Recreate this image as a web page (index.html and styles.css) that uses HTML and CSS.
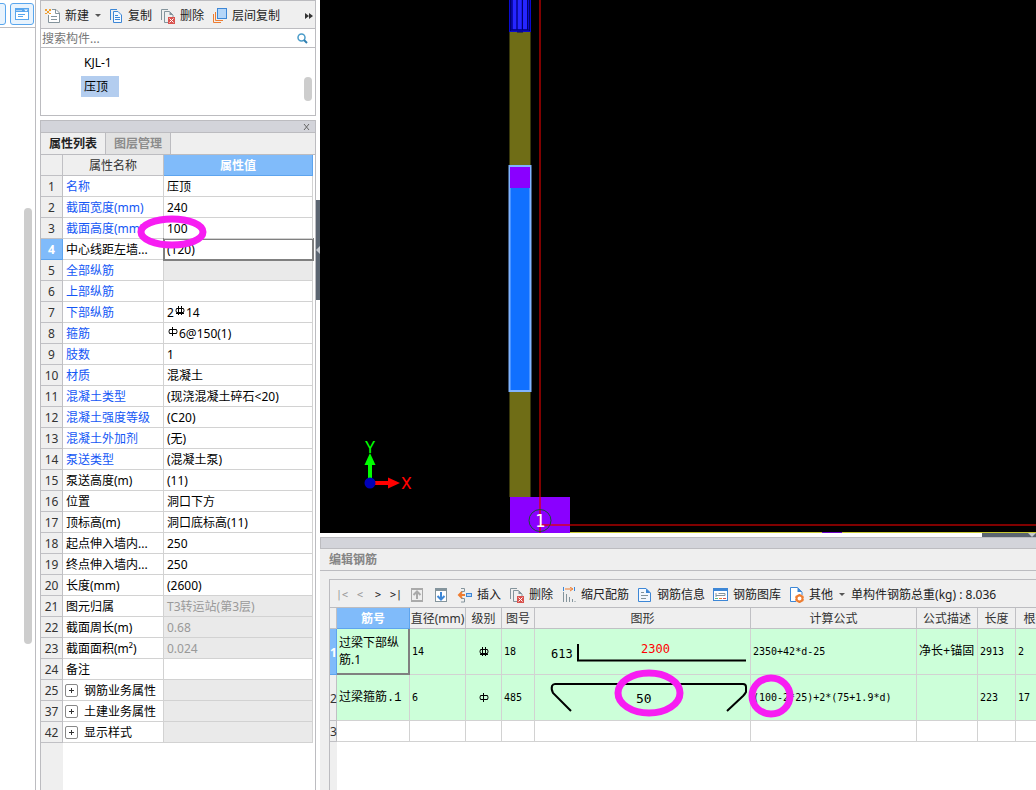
FILE: index.html
```html
<!DOCTYPE html>
<html lang="zh-CN">
<head>
<meta charset="utf-8">
<title>编辑钢筋</title>
<link rel="stylesheet" href="styles.css">
</head>
<body>
<svg width="0" height="0" class="defs" aria-hidden="true">
  <defs>
    <symbol id="i-delete" viewBox="0 0 15 16">
      <path d="M1.5 12V1.5H8" fill="none" stroke="#84949c"/>
      <path d="M9 14.5H4.500V3.500H9.500L13 7V9" fill="none" stroke="#84949c"/>
      <path d="M9.500 3.500V7H13z" fill="#84949c"/>
      <rect x="8" y="9" width="7" height="7" fill="#d9534f"/>
      <path d="M9.500 10.500l4 4m0-4l-4 4" stroke="#fff" stroke-width="1"/>
    </symbol>
    <symbol id="i-doc" viewBox="0 0 15 16">
      <path d="M1.500 1.500H9L13.500 6V14.500H1.500z" fill="#f4f9ff" stroke="#3d87d6"/>
      <path d="M9 1.500V6H13.500z" fill="#3d87d6"/>
      <path d="M4 5.500H7M4 8.500H11M4 11.500H9" stroke="#84949c"/>
    </symbol>
    <symbol id="r-two" viewBox="0 0 10 10">
      <path d="M1.500 2.500H8.500L9 4.500L8.500 6.500H1.500L1 4.500zM3.500 0V9M6.500 0V9M1 7.500H9" fill="none" stroke="#000"/>
    </symbol>
    <symbol id="r-one" viewBox="0 0 10 10">
      <path d="M1.500 2.500H8.500L9 4.500L8.500 6.500H1.500L1 4.500zM4.500 0V9" fill="none" stroke="#000"/>
    </symbol>
  </defs>
</svg>
<div class="app">
  <aside class="rail">
    <div class="rail-head">
      <button class="rail-btn" aria-label="列表视图"></button>
      <button class="rail-btn" aria-label="窗口视图">
        <svg width="14" height="12" viewBox="0 0 14 12"><rect x=".5" y=".5" width="13" height="11" fill="#fff" stroke="#58a6ee"/><rect width="14" height="4" fill="#58a6ee"/><path d="M1.500 2.500h1m1 0h1m1 0h1" stroke="#fff"/><path d="M9 1.500h4l-2 2z" fill="#fff"/><path d="M3 6.500h7M3 8.500h5" stroke="#58a6ee"/></svg>
      </button>
    </div>
    <div class="rail-thumb"></div>
  </aside>

  <section class="side">
    <div class="components">
      <div class="toolbar">
        <button class="tool"><svg width="15" height="16" viewBox="0 0 15 16"><path d="M7 1.500H11L14.500 5V14.500H3.500V7" fill="#fff" stroke="#84949c"/><path d="M10.500 1.500V5.500H14.500M6 8.500h6M6 11.500h6" fill="none" stroke="#84949c"/><path d="M0 1h2v2H0zM4 1h2v2H4zM2 3h2v2H2zM0 5h2v1H0zM4 5h2v1H4z" fill="#f0a030"/></svg>新建<span class="caret"></span></button>
        <button class="tool after-menu"><svg width="15" height="16" viewBox="0 0 15 16"><path d="M2.500 12V1.500H9" fill="none" stroke="#3d87d6"/><path d="M5.500 3.500H10L13.500 7V14.500H5.500z" fill="#f4f9ff" stroke="#3d87d6"/><path d="M7 7.500h3M7 9.500h5M7 11.500h5" stroke="#3d87d6"/></svg>复制</button>
        <button class="tool"><svg width="15" height="16"><use href="#i-delete"/></svg>删除</button>
        <button class="tool"><svg width="15" height="16" viewBox="0 0 15 16"><path d="M1.500 6V14.500H9" fill="none" stroke="#ee7d31"/><path d="M3.500 4V12.500H11" fill="none" stroke="#ee7d31"/><rect x="5.500" y=".5" width="9" height="10" fill="#b5d6f8" stroke="#3d87d6"/></svg>层间复制</button>
        <button class="more" aria-label="更多"><svg width="8" height="6" viewBox="0 0 8 6"><path d="M0 0l4 3-4 3zM4 0l4 3-4 3z" fill="#333"/></svg></button>
      </div>
      <div class="search">
        <input type="text" placeholder="搜索构件..." aria-label="搜索构件">
        <svg width="11" height="11" viewBox="0 0 11 11"><circle cx="4.500" cy="4.500" r="3.500" fill="none" stroke="#4a9cc9" stroke-width="1.500"/><path d="M7 7l3 3" stroke="#2f7fb0" stroke-width="2"/></svg>
      </div>
      <div class="tree">
        <ul>
          <li><span>KJL-1</span></li>
          <li><span class="picked">压顶</span></li>
        </ul>
        <div class="tree-thumb"></div>
      </div>
    </div>

    <div class="props">
      <div class="props-title"><button class="close" aria-label="关闭"><svg width="7" height="6" viewBox="0 0 7 6"><path d="M1 0l5 6M6 0l-5 6" stroke="#666"/></svg></button></div>
      <div class="tabs"><button class="tab on">属性列表</button><button class="tab">图层管理</button></div>
      <div class="props-body">
        <table class="grid">
          <colgroup><col class="p-no"><col class="p-name"><col></colgroup>
          <thead><tr><th></th><th>属性名称</th><th class="hot">属性值</th></tr></thead>
          <tbody>
            <tr><th>1</th><td class="link">名称</td><td>压顶</td></tr>
            <tr><th>2</th><td class="link">截面宽度(mm)</td><td>240</td></tr>
            <tr><th>3</th><td class="link">截面高度(mm)</td><td class="marked">100<svg class="mark mark-height" width="70" height="34"><ellipse cx="35" cy="17" rx="31" ry="13"/></svg></td></tr>
            <tr><th class="hot">4</th><td>中心线距左墙...</td><td class="focus">(120)</td></tr>
            <tr><th>5</th><td class="link">全部纵筋</td><td class="off"></td></tr>
            <tr><th>6</th><td class="link">上部纵筋</td><td></td></tr>
            <tr><th>7</th><td class="link">下部纵筋</td><td>2<svg class="bar" width="12" height="10"><use href="#r-two" x="1" width="10" height="10"/></svg>14</td></tr>
            <tr><th>8</th><td class="link">箍筋</td><td><svg class="bar" width="12" height="10"><use href="#r-one" x="1" width="10" height="10"/></svg>6@150(1)</td></tr>
            <tr><th>9</th><td class="link">肢数</td><td>1</td></tr>
            <tr><th>10</th><td class="link">材质</td><td>混凝土</td></tr>
            <tr><th>11</th><td class="link">混凝土类型</td><td>(现浇混凝土碎石&lt;20)</td></tr>
            <tr><th>12</th><td class="link">混凝土强度等级</td><td>(C20)</td></tr>
            <tr><th>13</th><td class="link">混凝土外加剂</td><td>(无)</td></tr>
            <tr><th>14</th><td class="link">泵送类型</td><td>(混凝土泵)</td></tr>
            <tr><th>15</th><td>泵送高度(m)</td><td>(11)</td></tr>
            <tr><th>16</th><td>位置</td><td>洞口下方</td></tr>
            <tr><th>17</th><td>顶标高(m)</td><td>洞口底标高(11)</td></tr>
            <tr><th>18</th><td>起点伸入墙内...</td><td>250</td></tr>
            <tr><th>19</th><td>终点伸入墙内...</td><td>250</td></tr>
            <tr><th>20</th><td>长度(mm)</td><td>(2600)</td></tr>
            <tr><th>21</th><td>图元归属</td><td class="off">T3转运站(第3层)</td></tr>
            <tr><th>22</th><td>截面周长(m)</td><td class="off">0.68</td></tr>
            <tr><th>23</th><td>截面面积(m²)</td><td class="off">0.024</td></tr>
            <tr><th>24</th><td>备注</td><td></td></tr>
            <tr><th>25</th><td class="group"><button class="plus" aria-label="展开"></button>钢筋业务属性</td><td class="off"></td></tr>
            <tr><th>37</th><td class="group"><button class="plus" aria-label="展开"></button>土建业务属性</td><td class="off"></td></tr>
            <tr><th>42</th><td class="group"><button class="plus" aria-label="展开"></button>显示样式</td><td class="off"></td></tr>
          </tbody>
        </table>
      </div>
    </div>
  </section>

  <div class="splitter"><button class="handle" aria-label="折叠"><svg width="4" height="8" viewBox="0 0 4 8"><path d="M4 0v8L0 4z" fill="#c5c9cf"/></svg></button></div>

  <main class="main">
    <div class="canvas">
      <svg class="drawing" width="100%" height="533">
        <rect x="190" y="31" width="20" height="467" fill="#6f6d16"/>
        <path d="M189.500 31V497M210.500 31V497" stroke="#38370b"/>
        <rect x="189" y="0" width="22" height="32" fill="#0b0bd0"/>
        <path d="M190.500 0V31M209.500 0V31" stroke="#00006e"/>
        <path d="M194.500 0V29M199.500 0V29M205 0V29" stroke="#2626ff" stroke-width="4"/>
        <path d="M192 0V30M197 0V30M202.500 0V30M207.500 0V30M191 30H209M197 32H203" stroke="#00006e" stroke-width="1"/>
        <rect x="189.500" y="166" width="21" height="225" fill="#1070ff" stroke="#80b4ff" stroke-width="2"/>
        <rect x="190" y="167" width="20" height="21" fill="#8a00ff"/>
        <rect x="190" y="497" width="60" height="36" fill="#8a00ff"/>
        <path d="M220 0V497" stroke="#800000" stroke-width="2"/>
        <path d="M220 497V533M220 525H250" stroke="#c2005c" stroke-width="2"/>
        <line x1="250" y1="525" x2="100%" y2="525" stroke="#800000" stroke-width="2"/>
        <line x1="250" y1="532.500" x2="100%" y2="532.500" stroke="#c8c832"/>
        <path d="M502 532.500H522" stroke="#6a00c8"/>
        <circle cx="220" cy="520.500" r="11" fill="none" stroke="#17503a" stroke-width="1"/>
        <text x="215" y="527" class="axis-no">1</text>
        <path d="M50 479V463" stroke="#0f0" stroke-width="4"/>
        <path d="M50 453l5.500 12h-11z" fill="#0f0"/>
        <path d="M55 483H69" stroke="#f00" stroke-width="4"/>
        <path d="M80 483l-12-5.500v11z" fill="#f00"/>
        <circle cx="50" cy="483" r="5.500" fill="#0000b8"/>
        <text x="45" y="453" class="axis axis-y">Y</text>
        <text x="81" y="489" class="axis axis-x">X</text>
      </svg>
    </div>
    <div class="h-splitter"><button class="handle" aria-label="折叠"><svg width="8" height="4" viewBox="0 0 8 4"><path d="M0 0h8L4 4z" fill="#c5c9cf"/></svg></button></div>

    <section class="editor">
      <div class="editor-bar"></div>
      <h2>编辑钢筋</h2>
      <div class="editor-body">
        <div class="toolbar">
          <button class="page dim">|&lt;</button><button class="page dim">&lt;</button><button class="page">&gt;</button><button class="page">&gt;|</button>
          <button class="move" aria-label="上移"><svg width="12" height="14" viewBox="0 0 12 14"><rect x=".5" y=".5" width="11" height="13" fill="#efefef" stroke="#aaa"/><path d="M0 1h12M0 13h12" stroke="#aaa" stroke-width="2"/><path d="M6 11V4M2.500 7L6 3.500 9.500 7" fill="none" stroke="#aaa" stroke-width="2"/></svg></button>
          <button class="move" aria-label="下移"><svg width="12" height="14" viewBox="0 0 12 14"><rect x=".5" y=".5" width="11" height="13" fill="#fff" stroke="#84949c"/><path d="M0 1.500h12" stroke="#84949c" stroke-width="3"/><path d="M6 4V11M2.500 8L6 11.500 9.500 8" fill="none" stroke="#3d87d6" stroke-width="2"/></svg></button>
          <button class="tool insert"><svg width="15" height="16" viewBox="0 0 15 16"><path d="M4 1.500H7.500V4.500H4M4 11.500H7.500V15H4" fill="none" stroke="#84949c"/><path d="M2 8H8M5 5L2 8l3 3" fill="none" stroke="#ee7d31" stroke-width="2"/><rect x="9.500" y="6.500" width="5" height="3" fill="#b5d6f8" stroke="#3d87d6"/></svg>插入</button>
          <button class="tool"><svg width="15" height="16"><use href="#i-delete"/></svg>删除</button>
          <button class="tool"><svg width="15" height="16" viewBox="0 0 15 16"><path d="M2.500 0V4M13.500 0V4" stroke="#3d87d6"/><path d="M4 2h7M9 0l3 2-3 2" fill="none" stroke="#ee7d31"/><path d="M2.500 5V15M5.500 7V15M8.500 10V15M11.500 12V15M14 14V15" stroke="#84949c"/></svg>缩尺配筋</button>
          <button class="tool"><svg width="15" height="16"><use href="#i-doc"/></svg>钢筋信息</button>
          <button class="tool"><svg width="15" height="16" viewBox="0 0 15 16"><rect x=".5" y="1.500" width="14" height="12" fill="#fff" stroke="#3d87d6"/><path d="M0 2.500h15" stroke="#3d87d6" stroke-width="3"/><path d="M3 6v4M3 8.500H12M5.500 6.500H12V8.500" fill="none" stroke="#84949c"/><path d="M2 11.500h3" stroke="#5b8"/><path d="M6 11.500h3" stroke="#ee7d31"/><path d="M10 11.500h3" stroke="#d9534f"/></svg>钢筋图库</button>
          <button class="tool"><svg width="15" height="16" viewBox="0 0 15 16"><path d="M7 14.500H1.500V.5H8.500L13 5V8" fill="#fff" stroke="#3d87d6"/><path d="M8.500 0V5H13z" fill="#3d87d6"/><circle cx="10.500" cy="11.500" r="3" fill="#fff" stroke="#ee7d31" stroke-width="2"/><path d="M10.500 7v1M10.500 15v1M6.500 9.500l1 .5M13.500 13l1 .5M6.500 13.500l1-.5M13.500 10l1-.5" stroke="#ee7d31" stroke-width="2"/></svg>其他<span class="caret"></span></button>
          <span class="total">单构件钢筋总重(kg) : 8.036</span>
        </div>
        <div class="sheet-wrap">
          <table class="grid sheet">
            <colgroup><col class="s-no"><col class="s-id"><col class="s-dia"><col class="s-grade"><col class="s-fig"><col class="s-shape"><col class="s-formula"><col class="s-desc"><col class="s-len"><col class="s-count"></colgroup>
            <thead><tr><th></th><th class="hot">筋号</th><th>直径(mm)</th><th>级别</th><th>图号</th><th>图形</th><th>计算公式</th><th>公式描述</th><th>长度</th><th>根数</th></tr></thead>
            <tbody>
              <tr class="filled"><th class="hot">1</th><td class="editing">过梁下部纵筋.1</td><td>14</td><td class="mid"><svg class="grade" width="10" height="10"><use href="#r-two"/></svg></td><td>18</td>
                <td class="shape"><svg width="215" height="45"><path d="M43 15V31.500H211" fill="none" stroke="#000" stroke-width="2"/><text x="16" y="29" class="dim-text">613</text><text x="106" y="24" class="dim-text red">2300</text></svg></td>
                <td>2350+42*d-25</td><td>净长+锚固</td><td>2913</td><td>2</td></tr>
              <tr class="filled"><th>2</th><td>过梁箍筋.1</td><td>6</td><td class="mid"><svg class="grade" width="10" height="10"><use href="#r-one"/></svg></td><td>485</td>
                <td class="shape marked"><svg width="215" height="45"><path d="M36 36L18 18Q16 14 17 11Q18 9 20 9H208Q211 9 211 12V17Q210 19 208 21L192 36" fill="none" stroke="#000" stroke-width="2"/><text x="101" y="28" class="dim-text big">50</text></svg><svg class="mark mark-dim" width="70" height="48"><ellipse cx="35" cy="24" rx="31" ry="20"/></svg></td>
                <td class="marked">(100-2*25)+2*(75+1.9*d)<svg class="mark mark-formula" width="46" height="44"><ellipse cx="23" cy="22" rx="19" ry="18"/></svg></td><td></td><td>223</td><td>17</td></tr>
              <tr><th>3</th><td></td><td></td><td></td><td></td><td></td><td></td><td></td><td></td><td></td></tr>
            </tbody>
          </table>
        </div>
      </div>
    </section>
  </main>
</div>
</body>
</html>
```

FILE: styles.css
```css
* { box-sizing: border-box; }
body {
  margin: 0;
  background: #fff;
  color: #000;
  font: 12px/18px "Noto Sans", "Noto Sans CJK SC", sans-serif;
}
button {
  margin: 0;
  padding: 0;
  border: 0;
  background: none;
  color: inherit;
  font: inherit;
}
svg { flex: none; display: block; }
.defs { position: absolute; }
.app { display: flex; height: 100vh; overflow: hidden; }

/* left rail */
.rail { flex: none; width: 36px; border-right: 1px solid #bcbcc0; }
.rail-head {
  display: flex;
  justify-content: flex-end;
  align-items: center;
  gap: 4px;
  height: 28px;
  padding-right: 1px;
  border-bottom: 1px solid #bcbcc0;
  overflow: hidden;
}
.rail-btn {
  flex: none;
  display: flex;
  align-items: center;
  justify-content: center;
  width: 24px;
  height: 22px;
  border: 1px solid #58a6ee;
  border-radius: 3px;
  background: #e8f3fd;
}
.rail-thumb {
  width: 8px;
  height: 436px;
  margin: 180px 3px 0 auto;
  border-radius: 4px;
  background: #cdcdcd;
}

/* component list and properties */
.side {
  flex: none;
  display: flex;
  flex-direction: column;
  gap: 4px;
  width: 276px;
  margin-left: 4px;
}
.components { border: 1px solid #bcbcc0; }
.toolbar {
  display: flex;
  align-items: center;
  gap: 8px;
  height: 28px;
  padding: 2px 2px 0 4px;
  border-bottom: 1px solid #bcbcc0;
  background: #efefef;
  color: #222;
  white-space: nowrap;
}
.tool { display: flex; align-items: center; gap: 5px; flex: none; }
.after-menu { margin-left: -1px; }
.caret {
  margin-left: 1px;
  border: 3px solid transparent;
  border-top-color: #555;
  border-bottom: 0;
}
.more { margin-left: auto; }
.search {
  display: flex;
  align-items: center;
  height: 19px;
  padding: 0 7px 0 1px;
  border-bottom: 1px solid #bcbcc0;
}
.search input {
  flex: 1;
  min-width: 0;
  height: 18px;
  padding: 2px 0 0;
  border: 0;
  outline: 0;
  background: none;
  font: inherit;
}
.search input::placeholder { color: #777; opacity: 1; }
.tree { display: flex; height: 67px; padding: 4px 3px 0 40px; }
.tree ul { flex: 1; margin: 0; padding: 0; list-style: none; }
.tree li { height: 24px; line-height: 21px; }
.tree li span { display: inline-block; padding: 0 11px 0 3px; }
.tree .picked { background: #b3cdef; }
.tree-thumb { width: 8px; height: 24px; margin-top: 25px; border-radius: 4px; background: #cdcdcd; }

.props {
  flex: 1;
  display: flex;
  flex-direction: column;
  min-height: 0;
  border: 1px solid #bcbcc0;
  border-bottom: 0;
}
.props-title {
  display: flex;
  align-items: center;
  justify-content: flex-end;
  height: 12px;
  padding-right: 5px;
  border-bottom: 1px solid #bcbcc0;
  background: #d3d4da;
}
.tabs { display: flex; height: 22px; border-bottom: 1px solid #bcbcc0; background: #efefef; }
.tab { width: 65px; border-right: 1px solid #bcbcc0; background: #e2e2e2; color: #8c8c8c; font-weight: 700; }
.tab.on { background: #efefef; color: #222; }
.props-body {
  flex: 1;
  min-height: 0;
  padding-right: 2px;
  background: linear-gradient(to right, #efefef 22px, #fff 22px);
}

.grid { width: 100%; table-layout: fixed; border-collapse: separate; border-spacing: 0; }
.grid th, .grid td {
  height: 21px;
  padding: 2px 3px 0;
  border-right: 1px solid #d2d2d2;
  border-bottom: 1px solid #d2d2d2;
  background: #fff;
  text-align: left;
  white-space: nowrap;
}
.grid th {
  padding: 2px 0 0;
  border-color: #c0c0c4;
  background: #efefef;
  color: #333;
  font-weight: 400;
  text-align: center;
}
.grid th.hot { border-color: #5da4ee; background: #80bbfa; color: #fff; font-weight: 700; }
.p-no { width: 22px; }
.p-name { width: 101px; }
.grid td.link { color: #1457f5; }
.grid td.off { background: #eaeaea; color: #999; }
.grid td.focus { outline: 2px solid #808080; outline-offset: -1px; }
.bar { display: inline-block; vertical-align: 1px; }
.plus {
  width: 13px;
  height: 13px;
  margin: 0 6px 0 -1px;
  border: 1px solid #888;
  border-radius: 2px;
  background: linear-gradient(#333, #333) center / 5px 1px no-repeat, linear-gradient(#333, #333) center / 1px 5px no-repeat;
  vertical-align: -1px;
}

/* hand-drawn rings over the values */
.grid td.marked { position: relative; overflow: visible; }
.mark { position: absolute; z-index: 2; pointer-events: none; }
.mark ellipse { fill: none; stroke: #f71df2; stroke-width: 7px; }
.mark-height { left: -27px; top: -3px; }
.mark-dim { left: 79px; top: -6px; }
.mark-formula { left: -3px; top: -1px; }

.splitter { flex: none; width: 4px; padding-top: 200px; }
.splitter .handle { display: grid; place-items: center; width: 4px; height: 100px; background: #5b6571; }

/* drawing area */
.main { flex: 1; display: flex; flex-direction: column; min-width: 0; }
.canvas { flex: 1; min-height: 0; overflow: hidden; background: #000; }
.axis { font: 17px Roboto, sans-serif; }
.axis-y { fill: #0f0; }
.axis-x { fill: #f00; }
.axis-no { font: 17px "DejaVu Sans Mono", monospace; fill: #fff; }
.h-splitter { flex: none; display: flex; justify-content: flex-end; height: 4px; }
.h-splitter .handle { display: flex; justify-content: flex-end; width: 54px; height: 4px; background: #5b6571; }

/* rebar editor */
.editor { display: flex; flex-direction: column; min-height: 253px; background: #efefef; }
.editor-bar { height: 12px; border: 1px solid #bcbcc0; border-right: 0; background: #d3d4da; }
.editor h2 {
  margin: 0 0 8px;
  padding: 1px 9px 0;
  border-bottom: 1px solid #bcbcc0;
  color: #858585;
  font-size: 12px;
  line-height: 20px;
  font-weight: 700;
}
.editor-body {
  flex: 1;
  margin-left: 9px;
  border: 1px solid #bcbcc0;
  border-width: 1px 0 0 1px;
  overflow: hidden;
}
.editor .toolbar { padding-left: 3px; }
.page, .move { flex: none; margin-right: -8px; }
.page { width: 18px; font: 10px/18px "DejaVu Sans Mono", monospace; }
.page.dim { color: #999; }
.move { display: grid; place-items: center; width: 24px; }
.insert { margin-left: 4px; }
.total { margin-left: -2px; }
.sheet-wrap { height: 100%; background: linear-gradient(to right, #efefef 7px, #fff 7px); }
.sheet { width: 726px; }
.s-no { width: 7px; }
.s-id { width: 73px; }
.s-dia { width: 56px; }
.s-grade { width: 36px; }
.s-fig { width: 33px; }
.s-shape { width: 216px; }
.s-formula { width: 166px; }
.s-desc { width: 61px; }
.s-len { width: 38px; }
.s-count { width: 40px; }
.sheet td { padding: 0 2px; font-family: "DejaVu Sans Mono", "Noto Sans CJK SC", monospace; font-size: 10px; }
.sheet td:nth-child(2), .sheet td:nth-child(8) { font-size: 12px; font-family: "Liberation Mono", "Noto Sans CJK SC", monospace; }
.sheet .filled td { height: 46px; background: #ccffd9; }
.sheet td.editing {
  border-right: 2px solid #808080;
  border-bottom: 2px solid #808080;
  font-family: "Noto Sans", "Noto Sans CJK SC", sans-serif;
  line-height: 17px;
  white-space: normal;
}
.sheet td.shape { padding: 0; }
.grade { margin: 0 auto; }
.dim-text { font: 12px "DejaVu Sans Mono", monospace; }
.dim-text.red { fill: #f00; }
.dim-text.big { font-size: 13px; }
```
